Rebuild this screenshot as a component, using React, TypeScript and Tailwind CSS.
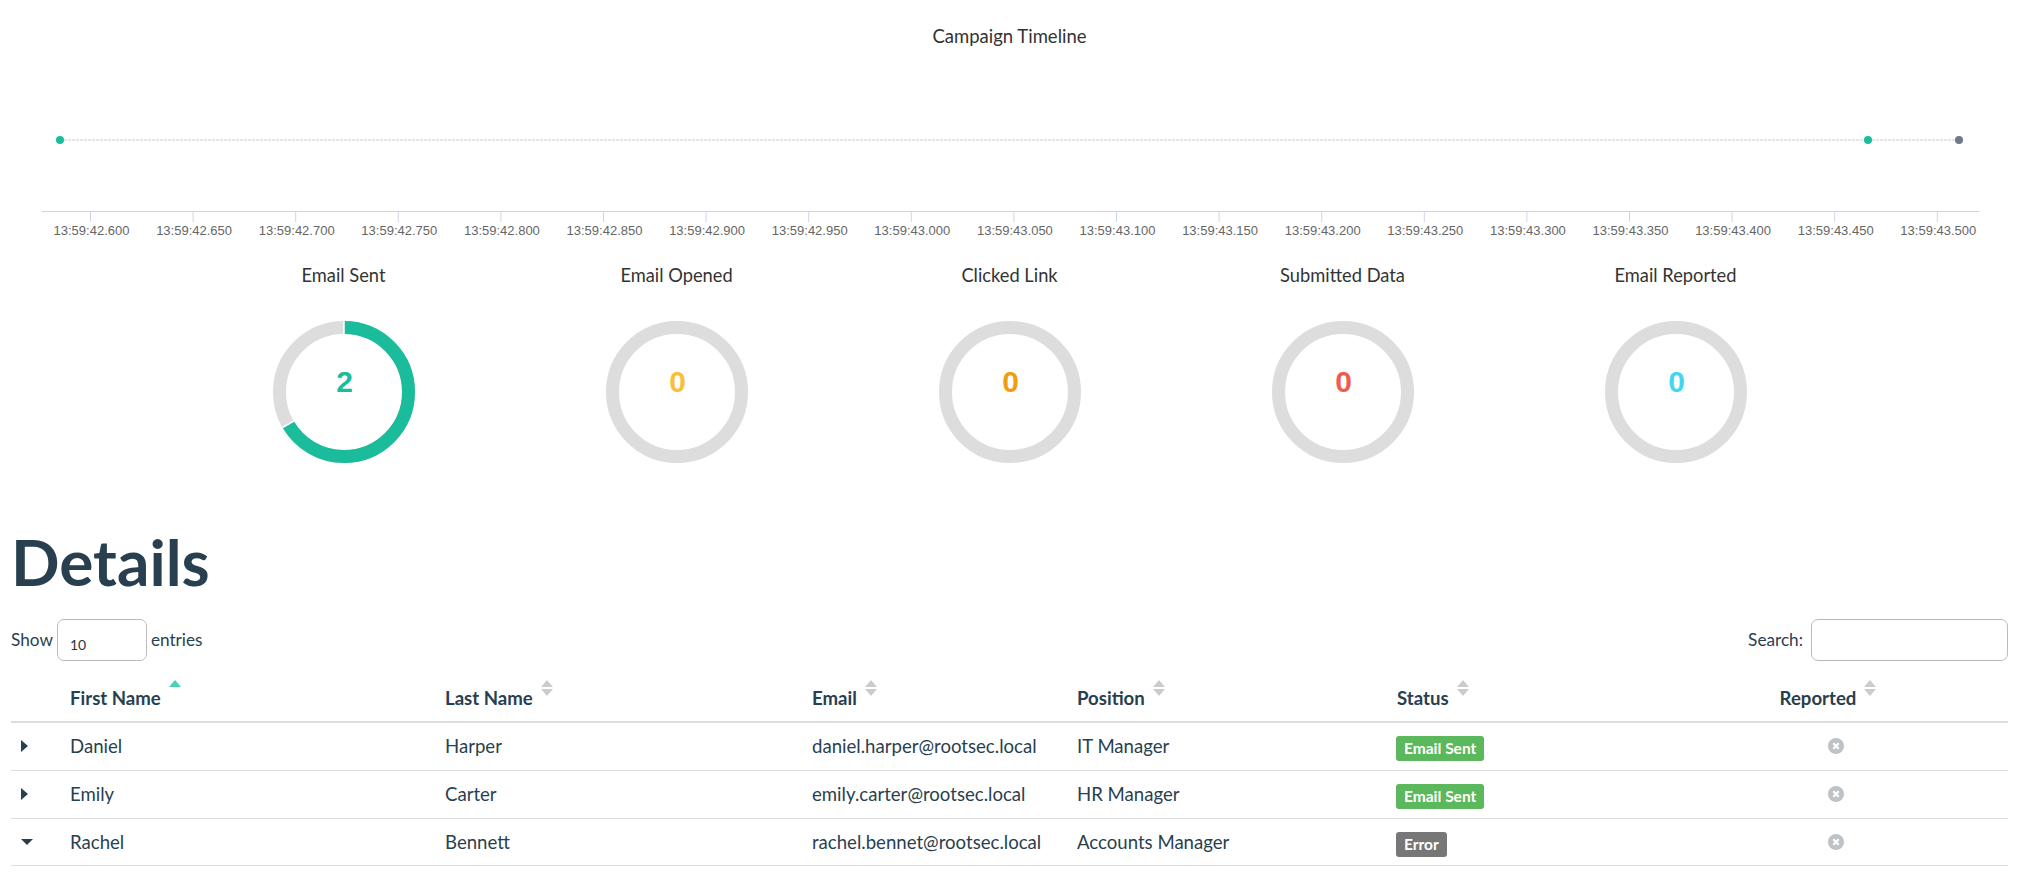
const ticks = [
  "13:59:42.600", "13:59:42.650", "13:59:42.700", "13:59:42.750", "13:59:42.800",
  "13:59:42.850", "13:59:42.900", "13:59:42.950", "13:59:43.000", "13:59:43.050",
  "13:59:43.100", "13:59:43.150", "13:59:43.200", "13:59:43.250", "13:59:43.300",
  "13:59:43.350", "13:59:43.400", "13:59:43.450", "13:59:43.500",
];

const stats = [
  { label: "Email Sent", value: 2, color: "#1abc9c", arc: true },
  { label: "Email Opened", value: 0, color: "#f9bf3b", arc: false },
  { label: "Clicked Link", value: 0, color: "#f39c12", arc: false },
  { label: "Submitted Data", value: 0, color: "#f05b4f", arc: false },
  { label: "Email Reported", value: 0, color: "#45d6ef", arc: false },
];

const rows = [
  { first: "Daniel", last: "Harper", email: "daniel.harper@rootsec.local", position: "IT Manager", status: "Email Sent", open: false },
  { first: "Emily", last: "Carter", email: "emily.carter@rootsec.local", position: "HR Manager", status: "Email Sent", open: false },
  { first: "Rachel", last: "Bennett", email: "rachel.bennet@rootsec.local", position: "Accounts Manager", status: "Error", open: true },
];

function Timeline() {
  return (
    <svg width="1997" height="202" viewBox="11 48 1997 202" className="block">
      <line x1="60" y1="140" x2="1959" y2="140" stroke="#cccccc" strokeDasharray="3 1" />
      <circle cx="60" cy="140" r="4" fill="#1abc9c" />
      <circle cx="1868" cy="140" r="4" fill="#1abc9c" />
      <circle cx="1959" cy="140" r="4" fill="#6c7a89" />
      <line x1="42" y1="211.5" x2="1979" y2="211.5" stroke="#ccd6eb" />
      {ticks.map((t, i) => {
        const x = 90.5 + i * 102.6;
        return (
          <g key={t}>
            <line x1={x} y1="211" x2={x} y2="222" stroke="#ccd6eb" />
            <text x={x + 1} y="235" textAnchor="middle" fontSize="13" fill="#666666" fontFamily="'Liberation Sans', sans-serif">
              {t}
            </text>
          </g>
        );
      })}
    </svg>
  );
}

function Donut({ value, color, arc }: { value: number; color: string; arc: boolean }) {
  return (
    <svg width="142" height="142" viewBox="0 0 142 142" className="block">
      <circle cx="71" cy="71" r="64.5" fill="none" stroke="#dddddd" strokeWidth="13" />
      {arc && (
        <>
          <circle
            cx="71"
            cy="71"
            r="64.5"
            fill="none"
            stroke={color}
            strokeWidth="13"
            pathLength="3"
            strokeDasharray="2 1"
            transform="rotate(-90 71 71)"
          />
          <line x1="71" y1="0" x2="71" y2="14" stroke="#ffffff" strokeWidth="1.5" />
          <line x1="9.5" y1="106.5" x2="21.7" y2="99.5" stroke="#ffffff" strokeWidth="1.5" />
        </>
      )}
      <text x="71.5" y="71" textAnchor="middle" fontSize="30" fontWeight="700" fill={color} fontFamily="'Liberation Sans', sans-serif">
        {value}
      </text>
    </svg>
  );
}

function SortIcon({ active }: { active?: boolean }) {
  return (
    <svg width="12" height="16" viewBox="0 0 12 16" className="ml-2 shrink-0">
      <path d="M6 0L12 7H0Z" fill={active ? "#4ccfb5" : "#cccccc"} />
      {!active && <path d="M0 9H12L6 16Z" fill="#cccccc" />}
    </svg>
  );
}

function Th({ label, active, className }: { label: string; active?: boolean; className?: string }) {
  return (
    <th className={"pt-[19px] px-2 align-top font-bold text-left " + (className ?? "")}>
      <div className={"flex items-start " + (label === "Reported" ? "justify-center" : "")}>
        <span className="mt-[6px] leading-6">{label}</span>
        <SortIcon active={active} />
      </div>
    </th>
  );
}

function Caret({ open }: { open: boolean }) {
  return open ? (
    <svg width="12" height="6" viewBox="0 0 12 6" className="ml-[2px]">
      <path d="M0 0H12L6 6Z" fill="#283f50" />
    </svg>
  ) : (
    <svg width="7" height="12" viewBox="0 0 7 12" className="ml-[2px]">
      <path d="M0 0L7 6L0 12Z" fill="#283f50" />
    </svg>
  );
}

function CloseIcon() {
  return (
    <svg width="16" height="16" viewBox="0 0 16 16" className="mx-auto -mt-[2px]">
      <circle cx="8" cy="8" r="8" fill="#bdc3c7" />
      <path d="M5.3 5.3L10.7 10.7M10.7 5.3L5.3 10.7" stroke="#ffffff" strokeWidth="2.2" />
    </svg>
  );
}

export default function App() {
  return (
    <div className="w-[2030px] h-[874px] overflow-hidden bg-white pl-[11px] pr-[22px] text-[#283f50] font-['Lato',sans-serif]">
      <div className="pt-6 text-center text-[18.5px] leading-6 text-[#333333]">Campaign Timeline</div>
      <Timeline />

      <div className="ml-[166px] flex">
        {stats.map((s) => (
          <div key={s.label} className="w-[333px] flex flex-col items-center">
            <div className="mt-[13px] text-[18.3px] leading-6 text-[#333333]">{s.label}</div>
            <div className="mt-[34px]">
              <Donut value={s.value} color={s.color} arc={s.arc} />
            </div>
          </div>
        ))}
      </div>

      <h1 className="mt-[64px] text-[64px] leading-[70px] font-bold">Details</h1>

      <div className="mt-[22px] flex h-[42px] items-center justify-between text-[17.2px]">
        <div className="flex items-center">
          <span>Show</span>
          <div className="mx-[4px] flex h-[42px] w-[90px] items-end rounded-[7px] border border-[#bbbbbb] pb-[5px] pl-3 text-[14px] leading-5 text-[#333333]">
            10
          </div>
          <span>entries</span>
        </div>
        <div className="flex items-center">
          <span>Search:</span>
          <div className="ml-2 h-[42px] w-[197px] rounded-[7px] border border-[#bbbbbb]" />
        </div>
      </div>

      <table className="w-[1997px] table-fixed border-collapse text-[18.6px]">
        <colgroup>
          <col className="w-[51px]" />
          <col className="w-[375px]" />
          <col className="w-[367px]" />
          <col className="w-[265px]" />
          <col className="w-[320px]" />
          <col className="w-[275px]" />
          <col className="w-[344px]" />
        </colgroup>
        <thead>
          <tr className="h-[61px] border-b-2 border-[#dddddd]">
            <th />
            <Th label="First Name" active />
            <Th label="Last Name" />
            <Th label="Email" />
            <Th label="Position" />
            <Th label="Status" />
            <Th label="Reported" className="pr-6" />
          </tr>
        </thead>
        <tbody>
          {rows.map((r) => (
            <tr key={r.email} className="h-[48px] last:h-[47px] border-b border-[#dddddd]">
              <td className="pl-2">
                <Caret open={r.open} />
              </td>
              <td className="px-2 pt-[2px]">{r.first}</td>
              <td className="px-2 pt-[2px]">{r.last}</td>
              <td className="px-2 pt-[2px]">{r.email}</td>
              <td className="px-2 pt-[2px]">{r.position}</td>
              <td className="px-2 pt-[4px]">
                <span
                  className={
                    "-ml-px inline-block h-[25px] rounded-[3px] px-[8px] text-[15.5px] leading-[25px] font-bold text-white " +
                    (r.status === "Error" ? "bg-[#777777]" : "bg-[#5cb85c]")
                  }
                >
                  {r.status}
                </span>
              </td>
              <td className="px-2 pt-[2px]">
                <CloseIcon />
              </td>
            </tr>
          ))}
        </tbody>
      </table>
    </div>
  );
}
